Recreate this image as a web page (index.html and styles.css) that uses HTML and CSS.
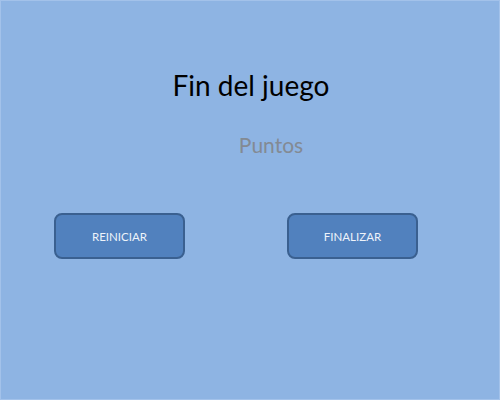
FILE: index.html
```html
<!DOCTYPE html>
<html lang="es">
<head>
<meta charset="utf-8">
<title>Fin del juego</title>
<link rel="stylesheet" href="styles.css">
</head>
<body>
<div class="screen">
  <h1 class="title">Fin del juego</h1>
  <div class="score">Puntos</div>
  <div class="actions">
    <button class="btn">REINICIAR</button>
    <button class="btn">FINALIZAR</button>
  </div>
</div>
</body>
</html>
```

FILE: styles.css
```css
html, body {
  margin: 0;
  padding: 0;
}
body {
  width: 500px;
  height: 400px;
  overflow: hidden;
  background: #8eb4e3;
  font-family: Lato, "Open Sans", sans-serif;
}
.screen {
  box-sizing: border-box;
  width: 500px;
  height: 400px;
  border: 1px solid #a3c2ea;
  display: flex;
  flex-direction: column;
}
.title {
  margin: 64px 0 0 0;
  font-size: 28px;
  font-weight: 400;
  line-height: 40px;
  color: #000;
  text-align: center;
  padding-left: 2px;
}
.score {
  margin-top: 27px;
  font-size: 21px;
  line-height: 26px;
  color: #838a93;
  text-align: center;
  padding-left: 42px;
}
.actions {
  display: flex;
  gap: 102px;
  margin-top: 55px;
  padding-left: 53px;
}
.btn {
  box-sizing: border-box;
  width: 131px;
  height: 46px;
  border: 2px solid #3a6090;
  border-radius: 8px;
  background: #5181be;
  color: #eef3fa;
  font-family: Lato, "Open Sans", sans-serif;
  font-size: 11.5px;
  padding: 0;
}
```
